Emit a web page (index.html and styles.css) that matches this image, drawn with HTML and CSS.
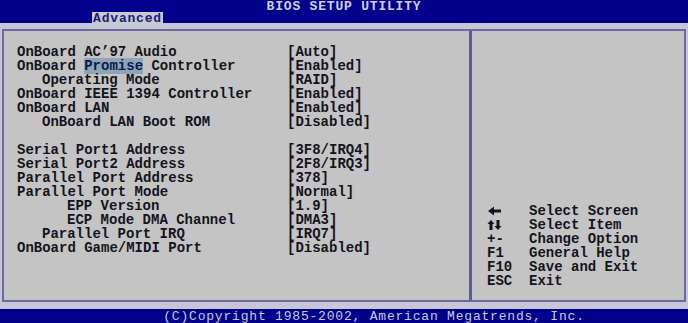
FILE: index.html
```html
<!DOCTYPE html>
<html>
<head>
<meta charset="utf-8">
<link rel="stylesheet" href="styles.css">
</head>
<body>
<div class="header">
  <div class="title">BIOS SETUP UTILITY</div>
  <div class="tab">Advanced</div>
</div>
<div class="frame">
  <div class="box">
    <div class="settings">
      <div class="row"><span>OnBoard AC’97 Audio</span><span>[Auto]</span></div>
      <div class="row"><span>OnBoard <span class="sel">Promise</span> Controller</span><span>[Enabled]</span></div>
      <div class="row"><span class="i1">Operating Mode</span><span>[RAID]</span></div>
      <div class="row"><span>OnBoard IEEE 1394 Controller</span><span>[Enabled]</span></div>
      <div class="row"><span>OnBoard LAN</span><span>[Enabled]</span></div>
      <div class="row"><span class="i1">OnBoard LAN Boot ROM</span><span>[Disabled]</span></div>
      <div class="blank"></div>
      <div class="row"><span>Serial Port1 Address</span><span>[3F8/IRQ4]</span></div>
      <div class="row"><span>Serial Port2 Address</span><span>[2F8/IRQ3]</span></div>
      <div class="row"><span>Parallel Port Address</span><span>[378]</span></div>
      <div class="row"><span>Parallel Port Mode</span><span>[Normal]</span></div>
      <div class="row"><span class="i2">EPP Version</span><span>[1.9]</span></div>
      <div class="row"><span class="i2">ECP Mode DMA Channel</span><span>[DMA3]</span></div>
      <div class="row"><span class="i1">Parallel Port IRQ</span><span>[IRQ7]</span></div>
      <div class="row"><span>OnBoard Game/MIDI Port</span><span>[Disabled]</span></div>
    </div>
    <div class="help">
      <div class="hrow"><span class="key"><svg class="ico" width="16" height="14" viewBox="0 0 16 14"><path d="M1 7 L7 2.5 L7 5.5 L14 5.5 L14 8.5 L7 8.5 L7 11.5 Z" fill="#141420"/></svg></span><span>Select Screen</span></div>
      <div class="hrow"><span class="key"><svg class="ico" width="18" height="14" viewBox="0 0 18 14"><path d="M4 2 L7.5 6 L5.5 6 L5.5 12 L2.5 12 L2.5 6 L0.5 6 Z" fill="#141420"/><path d="M11 12 L7.5 8 L9.5 8 L9.5 2 L12.5 2 L12.5 8 L14.5 8 Z" fill="#141420"/></svg></span><span>Select Item</span></div>
      <div class="hrow"><span class="key">+-</span><span>Change Option</span></div>
      <div class="hrow"><span class="key">F1</span><span>General Help</span></div>
      <div class="hrow"><span class="key">F10</span><span>Save and Exit</span></div>
      <div class="hrow"><span class="key">ESC</span><span>Exit</span></div>
    </div>
  </div>
</div>
<div class="footer">(C)Copyright 1985-2002, American Megatrends, Inc.</div>
</body>
</html>
```
FILE: styles.css
```css
html, body {
  margin: 0;
  padding: 0;
}
body {
  width: 688px;
  height: 323px;
  overflow: hidden;
  background: #00008a;
  font-family: "Liberation Mono", "DejaVu Sans Mono", monospace;
}
.header {
  display: grid;
  height: 23px;
}
.title {
  grid-area: 1 / 1;
  justify-self: center;
  align-self: start;
  font-size: 13px;
  line-height: 14px;
  font-weight: bold;
  letter-spacing: 0.8px;
  color: #cfd0e4;
}
.tab {
  grid-area: 1 / 1;
  justify-self: start;
  align-self: end;
  margin-left: 92px;
  margin-bottom: -2px;
  width: 71px;
  height: 13px;
  background: #c9c9d2;
  color: #16207a;
  font-size: 13px;
  line-height: 14px;
  font-weight: bold;
  letter-spacing: 0.8px;
  text-align: center;
}
.frame {
  background: #c6c6d6;
  padding: 6px 2px 7px 2px;
}
.box {
  height: 269px;
  border: 2px solid #6a6a9c;
  background: #c4c4c4;
  display: flex;
}
.settings {
  width: 452px;
  padding: 14px 0 0 13px;
  border-right: 3px solid #5c5c92;
  font-size: 14px;
  line-height: 14px;
  font-weight: bold;
  color: #141420;
}
.row {
  display: grid;
  grid-template-columns: 270px auto;
  height: 14px;
  white-space: pre;
}
.blank {
  height: 14px;
}
.i1 {
  padding-left: 25px;
}
.i2 {
  padding-left: 50px;
}
.sel {
  background: #8ea4b8;
  color: #0c1a48;
}
.help {
  flex: 1;
  display: flex;
  flex-direction: column;
  justify-content: flex-end;
  padding: 0 0 12px 15px;
  font-size: 14px;
  line-height: 14px;
  font-weight: bold;
  color: #141420;
}
.hrow {
  display: grid;
  grid-template-columns: 42px auto;
  height: 14px;
  white-space: pre;
}
.key {
  display: flex;
  align-items: center;
  height: 14px;
}
.ico {
  display: block;
}
.footer {
  height: 13px;
  padding-top: 1px;
  padding-left: 60px;
  text-align: center;
  font-size: 13px;
  line-height: 14px;
  letter-spacing: 0.8px;
  color: #cacada;
}
```
